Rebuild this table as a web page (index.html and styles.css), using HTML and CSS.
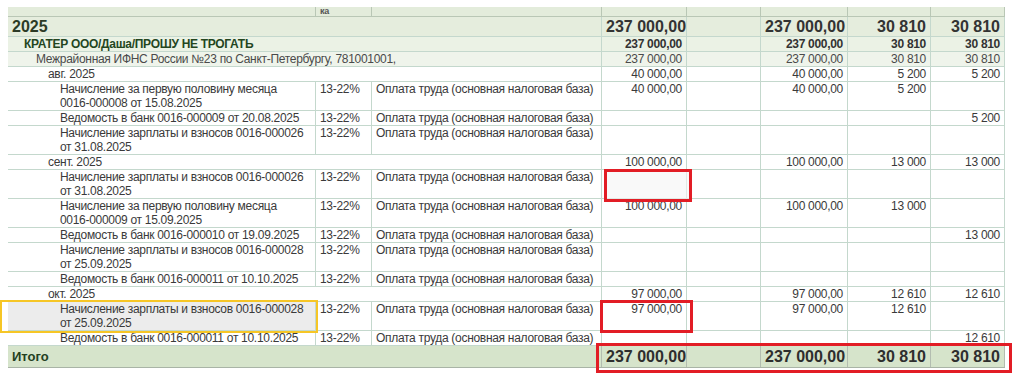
FILE: index.html
```html
<!DOCTYPE html>
<html lang="ru">
<head>
<meta charset="utf-8">
<link rel="stylesheet" href="styles.css">
</head>
<body>
<div class="page">
  <div class="grid">
    <div class="row head">
      <div class="c"></div><div class="c hk">ка</div><div class="c"></div><div class="c"></div><div class="c"></div><div class="c"></div><div class="c"></div><div class="c"></div>
    </div>
    <div class="row lvl0">
      <div class="c lab span3">2025</div><div class="c n">237 000,00</div><div class="c"></div><div class="c n">237 000,00</div><div class="c n">30 810</div><div class="c n">30 810</div>
    </div>
    <div class="row lvl1">
      <div class="c lab span3">КРАТЕР ООО/Даша/ПРОШУ НЕ ТРОГАТЬ</div><div class="c n">237 000,00</div><div class="c"></div><div class="c n">237 000,00</div><div class="c n">30 810</div><div class="c n">30 810</div>
    </div>
    <div class="row lvl2">
      <div class="c lab span3">Межрайонная ИФНС России №23 по Санкт-Петербургу, 781001001,</div><div class="c n">237 000,00</div><div class="c"></div><div class="c n">237 000,00</div><div class="c n">30 810</div><div class="c n">30 810</div>
    </div>
    <div class="row lvl3">
      <div class="c lab span3">авг. 2025</div><div class="c n">40 000,00</div><div class="c"></div><div class="c n">40 000,00</div><div class="c n">5 200</div><div class="c n">5 200</div>
    </div>
    <div class="row det">
      <div class="c lab">Начисление за первую половину месяца<br>0016-000008 от 15.08.2025</div><div class="c">13-22%</div><div class="c">Оплата труда (основная налоговая база)</div><div class="c n">40 000,00</div><div class="c"></div><div class="c n">40 000,00</div><div class="c n">5 200</div><div class="c n"></div>
    </div>
    <div class="row det">
      <div class="c lab">Ведомость в банк 0016-000009 от 20.08.2025</div><div class="c">13-22%</div><div class="c">Оплата труда (основная налоговая база)</div><div class="c n"></div><div class="c"></div><div class="c n"></div><div class="c n"></div><div class="c n">5 200</div>
    </div>
    <div class="row det">
      <div class="c lab">Начисление зарплаты и взносов 0016-000026<br>от 31.08.2025</div><div class="c">13-22%</div><div class="c">Оплата труда (основная налоговая база)</div><div class="c n"></div><div class="c"></div><div class="c n"></div><div class="c n"></div><div class="c n"></div>
    </div>
    <div class="row lvl3">
      <div class="c lab span3">сент. 2025</div><div class="c n">100 000,00</div><div class="c"></div><div class="c n">100 000,00</div><div class="c n">13 000</div><div class="c n">13 000</div>
    </div>
    <div class="row det">
      <div class="c lab">Начисление зарплаты и взносов 0016-000026<br>от 31.08.2025</div><div class="c">13-22%</div><div class="c">Оплата труда (основная налоговая база)</div><div class="c n"></div><div class="c"></div><div class="c n"></div><div class="c n"></div><div class="c n"></div>
    </div>
    <div class="row det">
      <div class="c lab">Начисление за первую половину месяца<br>0016-000009 от 15.09.2025</div><div class="c">13-22%</div><div class="c">Оплата труда (основная налоговая база)</div><div class="c n">100 000,00</div><div class="c"></div><div class="c n">100 000,00</div><div class="c n">13 000</div><div class="c n"></div>
    </div>
    <div class="row det">
      <div class="c lab">Ведомость в банк 0016-000010 от 19.09.2025</div><div class="c">13-22%</div><div class="c">Оплата труда (основная налоговая база)</div><div class="c n"></div><div class="c"></div><div class="c n"></div><div class="c n"></div><div class="c n">13 000</div>
    </div>
    <div class="row det">
      <div class="c lab">Начисление зарплаты и взносов 0016-000028<br>от 25.09.2025</div><div class="c">13-22%</div><div class="c">Оплата труда (основная налоговая база)</div><div class="c n"></div><div class="c"></div><div class="c n"></div><div class="c n"></div><div class="c n"></div>
    </div>
    <div class="row det">
      <div class="c lab">Ведомость в банк 0016-000011 от 10.10.2025</div><div class="c">13-22%</div><div class="c">Оплата труда (основная налоговая база)</div><div class="c n"></div><div class="c"></div><div class="c n"></div><div class="c n"></div><div class="c n"></div>
    </div>
    <div class="row lvl3">
      <div class="c lab span3">окт. 2025</div><div class="c n">97 000,00</div><div class="c"></div><div class="c n">97 000,00</div><div class="c n">12 610</div><div class="c n">12 610</div>
    </div>
    <div class="row det">
      <div class="c lab sel">Начисление зарплаты и взносов 0016-000028<br>от 25.09.2025</div><div class="c">13-22%</div><div class="c">Оплата труда (основная налоговая база)</div><div class="c n">97 000,00</div><div class="c"></div><div class="c n">97 000,00</div><div class="c n">12 610</div><div class="c n"></div>
    </div>
    <div class="row det">
      <div class="c lab">Ведомость в банк 0016-000011 от 10.10.2025</div><div class="c">13-22%</div><div class="c">Оплата труда (основная налоговая база)</div><div class="c n"></div><div class="c"></div><div class="c n"></div><div class="c n"></div><div class="c n">12 610</div>
    </div>
    <div class="row total">
      <div class="c lab span3">Итого</div><div class="c n">237 000,00</div><div class="c"></div><div class="c n">237 000,00</div><div class="c n">30 810</div><div class="c n">30 810</div>
    </div>
  </div>

  <div class="focus"></div>
  <div class="mark m1"></div>
  <div class="mark m2"></div>
  <div class="mark m3"></div>
</div>
</body>
</html>
```

FILE: styles.css
```css
html, body {
  margin: 0;
  padding: 0;
  background: #ffffff;
}
body {
  font-family: "Liberation Sans", Arial, sans-serif;
  font-size: 12px;
  color: #3a3a3a;
}
.page {
  position: relative;
  width: 1024px;
  height: 380px;
  overflow: hidden;
  padding-top: 7px;
  box-sizing: border-box;
}
.grid {
  margin-left: 8px;
  width: 997px;
}
.row {
  display: grid;
  grid-template-columns: 308px 56px 230px 85px 74px 87px 83px 74px;
  border-bottom: 1px solid #c4d8cd;
}
.c {
  line-height: 14px;
  border-right: 1px solid #c4d8cd;
  padding: 0 4px;
  white-space: nowrap;
  overflow: hidden;
  letter-spacing: -0.3px;
}
.span3 {
  grid-column: span 3;
}
.n {
  text-align: right;
}

/* header */
.head {
  background: #e3ecdb;
  border-bottom: 1px solid #b9c7b5;
}
.head .c {
  height: 9px;
  border-right-color: #b9c7b5;
  overflow: visible;
}
.hk {
  font-size: 9px;
  line-height: 8px;
  font-weight: bold;
  color: #555;
}

/* level 0 */
.lvl0 {
  background: #e5eddd;
}
.lvl0 .c {
  font-size: 16px;
  font-weight: bold;
  line-height: 19px;
  color: #2c3b26;
  letter-spacing: 0;
}
.lvl0 .n {
  color: #333;
}

/* level 1 */
.lvl1 {
  background: #ebf2e5;
}
.lvl1 .c {
  font-weight: bold;
  color: #333;
}
.lvl1 .lab {
  padding-left: 16px;
  color: #24461f;
}

/* level 2 */
.lvl2 {
  background: #eff4eb;
}
.lvl2 .c {
  color: #4a4a4a;
}
.lvl2 .lab {
  padding-left: 28px;
}

/* level 3 */
.lvl3 {
  background: #ffffff;
}
.lvl3 .lab {
  padding-left: 40px;
}

/* detail */
.det .lab {
  padding-left: 52px;
}

.sel {
  background: #ececec;
}

/* total */
.total {
  background: #d6e4cb;
  border-bottom: 1px solid #a9b4a6;
}
.total .c {
  line-height: 21px;
  border-right-color: #b3bdb0;
  font-weight: bold;
  color: #2e2e2e;
  letter-spacing: 0;
}
.total .lab {
  font-size: 13px;
  color: #24401f;
}
.total .n {
  font-size: 16px;
}

/* overlays */
.focus {
  position: absolute;
  left: 0;
  top: 300px;
  width: 318px;
  height: 33px;
  box-sizing: border-box;
  border: 2px solid #f6c626;
}
.mark {
  position: absolute;
  box-sizing: border-box;
  border: 3px solid #e21d25;
}
.m1 {
  left: 604px;
  top: 169px;
  width: 88px;
  height: 33px;
  background: rgba(245, 245, 245, 0.6);
}
.m2 {
  left: 600px;
  top: 300px;
  width: 93px;
  height: 33px;
}
.m3 {
  left: 596px;
  top: 343px;
  width: 416px;
  height: 30px;
}
```
